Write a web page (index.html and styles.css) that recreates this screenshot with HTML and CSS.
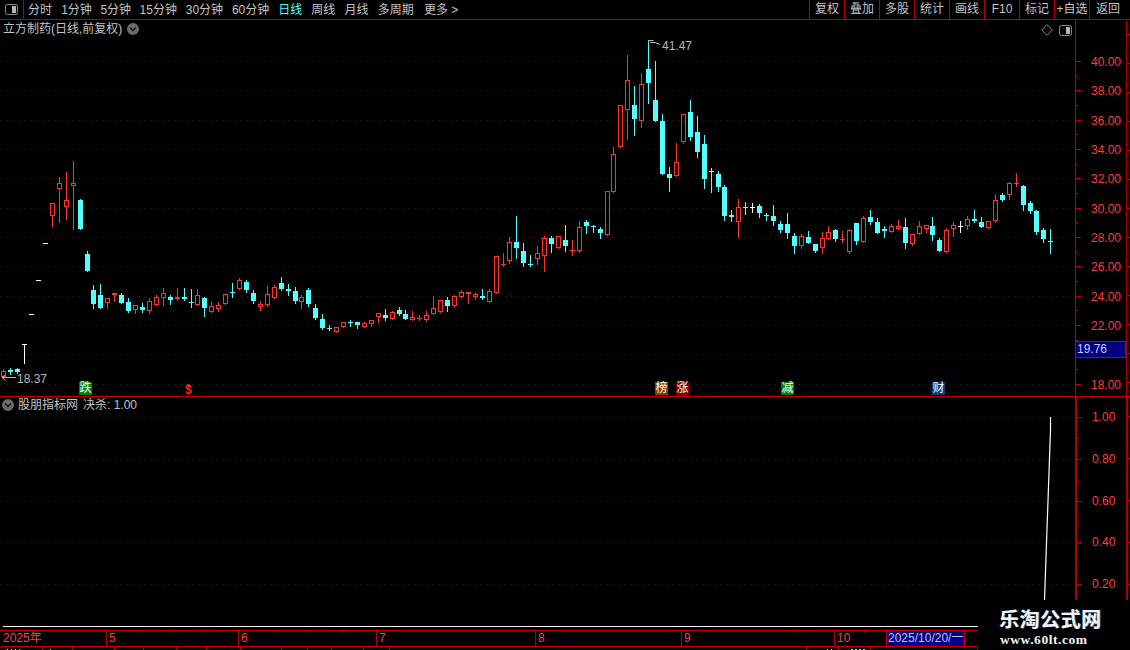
FILE: index.html
```html
<!DOCTYPE html>
<html lang="zh-CN">
<head>
<meta charset="utf-8">
<title>立方制药</title>
<link rel="stylesheet" href="styles.css">
</head>
<body>
<div class="app">
  <header class="toolbar">
    <div class="side-toggle">
      <svg class="icon-panel" viewBox="0 0 13 11"><rect x="0.5" y="0.5" width="12" height="10" rx="2" fill="none" stroke="#8a8a8a"/><rect x="7" y="2" width="4" height="7" fill="#b8b8b8"/></svg>
    </div>
    <nav class="periods">
      <span class="w24">分时</span><span class="w30">1分钟</span><span class="w30">5分钟</span><span class="w37">15分钟</span><span class="w37">30分钟</span><span class="w37">60分钟</span><span class="w24 active">日线</span><span class="w24">周线</span><span class="w24">月线</span><span class="w37">多周期</span><span>更多 &gt;</span>
    </nav>
    <nav class="actions">
      <span>复权</span><span>叠加</span><span>多股</span><span>统计</span><span>画线</span><span>F10</span><span>标记</span><span>+自选</span><span class="back">返回</span>
    </nav>
  </header>

  <section class="panel main-panel">
    <div class="plot">
      <svg id="price-chart" class="plot-svg" width="1075" height="376"></svg>
      <div class="panel-title">
        <span>立方制药(日线,前复权)</span>
        <svg class="chev" viewBox="0 0 12 12"><circle cx="6" cy="6" r="6" fill="#6a6a6a"/><path d="M3 4.5L6 7.5L9 4.5" fill="none" stroke="#111" stroke-width="1.3"/></svg>
      </div>
      <div class="plot-tools">
        <svg class="diamond" viewBox="0 0 12 12"><path d="M6 .7L11.3 6L6 11.3L.7 6Z" fill="none" stroke="#8a8a8a"/></svg>
        <svg class="icon-panel" viewBox="0 0 13 11"><rect x="0.5" y="0.5" width="12" height="10" rx="2" fill="none" stroke="#8a8a8a"/><rect x="7" y="2" width="4" height="7" fill="#b8b8b8"/></svg>
      </div>
      <div class="note high">41.47</div>
      <div class="note low">18.37</div>
      <span class="tag tag-green t-die">跌</span>
      <span class="dollar">$</span>
      <span class="tag tag-brown t-bang">榜</span>
      <span class="tag tag-red t-zhang">涨</span>
      <span class="tag tag-green t-jian">减</span>
      <span class="tag tag-blue t-cai">财</span>
    </div>
    <div class="axis">
      <svg id="price-axis" class="axis-svg" width="51" height="376"></svg>
      <div class="price-now">19.76</div>
    </div>
    <div class="edge"></div>
  </section>

  <section class="panel sub-panel">
    <div class="plot">
      <svg id="ind-chart" class="plot-svg" width="1075" height="203"></svg>
      <div class="panel-title sub-title">
        <svg class="chev" viewBox="0 0 12 12"><circle cx="6" cy="6" r="6" fill="#6a6a6a"/><path d="M3 4.500L6 7.500L9 4.500" fill="none" stroke="#111" stroke-width="1.3"/></svg>
        <span>股朋指标网</span><span class="value">决杀: 1.00</span>
      </div>
    </div>
    <div class="axis thick">
      <svg id="ind-axis" class="axis-svg" width="49" height="203"></svg>
    </div>
    <div class="edge thick"></div>
  </section>

  <footer class="footer">
    <div class="time-area">
      <div class="rule"></div>
      <div class="time-axis">
        <span class="m m-year">2025年</span><span class="m m-5">5</span><span class="m m-6">6</span><span class="m m-7">7</span><span class="m m-8">8</span><span class="m m-9">9</span><span class="m m-10">10</span>
        <span class="cursor-date">2025/10/20/一</span>
      </div>
      <div class="tabs">
        <span class="w43"><i class="bit bit-a"></i></span><span class="w30"><i class="bit bit-b"></i></span><span class="w42"></span><span class="w29"></span><span class="w33"></span><span class="w30"></span><span class="w34"></span><span class="w41"></span><span class="w26"></span><span class="w24"></span><span class="w32"></span><span class="w26"></span><span class="w417"></span><span class="w32"><i class="bit bit-c"></i></span><span class="w32"><i class="bit bit-d"></i></span><span class="w107"></span>
      </div>
    </div>
    <div class="watermark">
      <div class="wm-cn">乐淘公式网</div>
      <div class="wm-en">www.60lt.com</div>
    </div>
  </footer>
</div>
<script src="chart.js"></script>
</body>
</html>
```
FILE: styles.css
```css
* { box-sizing: border-box; }
html, body { margin: 0; padding: 0; background: #000; }
body {
  width: 1130px;
  height: 650px;
  overflow: hidden;
  font: 12px/14px "Liberation Sans", "Noto Sans CJK SC", sans-serif;
  color: #c4c4c4;
}
.app { display: flex; flex-direction: column; height: 650px; }

/* toolbar */
.toolbar {
  display: flex;
  height: 20px;
  flex: none;
  border-bottom: 1px solid #b00000;
}
.side-toggle {
  width: 24px;
  border-right: 1px solid #b00000;
  display: flex;
  align-items: center;
  padding-left: 5px;
}
.icon-panel { width: 13px; height: 11px; display: block; }
.periods { display: flex; gap: 9.2px; margin-left: 4px; align-items: center; white-space: nowrap; }
.periods span { display: block; }
.w24 { width: 24px; }
.w30 { width: 30px; }
.w37 { width: 37px; }
.active { color: #54ffff; }
.actions { display: flex; margin-left: auto; }
.actions span {
  width: 35px;
  border-left: 1px solid #b00000;
  text-align: center;
  line-height: 19px;
  white-space: nowrap;
}
.actions .back { width: 41px; padding-right: 4px; }

/* panels */
.panel { display: flex; flex: none; border-bottom: 1px solid #c00000; }
.main-panel { height: 377px; }
.sub-panel { height: 203px; border-bottom: 0; }
.plot { position: relative; width: 1075px; flex: none; }
.plot-svg { display: block; }
.axis { position: relative; width: 51px; flex: none; border-left: 1px solid #b00000; }
.axis.thick { border-left: 2px solid #b00000; }
.axis-svg { display: block; }
.edge {
  width: 4px;
  flex: none;
  border-left: 1px solid #b00000;
  background: repeating-linear-gradient(#b00000 0 1px, transparent 1px 29px) 0 14px;
}
.edge.thick { border-left-width: 2px; background: repeating-linear-gradient(#b00000 0 1px, transparent 1px 42px) 0 19px; }

.panel-title {
  position: absolute;
  left: 3px;
  top: 2px;
  display: flex;
  align-items: center;
  gap: 5px;
  white-space: nowrap;
}
.sub-title { left: 2px; top: 1px; gap: 4px; }
.sub-title .value { margin-left: 1px; }
.chev { width: 12px; height: 12px; display: block; }
.plot-tools {
  position: absolute;
  right: 3px;
  top: 4px;
  display: flex;
  gap: 6px;
  align-items: center;
}
.diamond { width: 12px; height: 12px; display: block; }

.note { position: absolute; color: #b8b8b8; }
.high { left: 662px; top: 19px; }
.low { left: 17px; top: 352px; }

.tag {
  position: absolute;
  top: 362px;
  width: 13px;
  height: 13px;
  color: #fff;
  font-size: 12px;
  line-height: 13px;
  text-align: center;
}
.tag-green { background: #008000; }
.tag-brown { background: #804000; }
.tag-red { background: #800000; }
.tag-blue { background: #004080; }
.t-die { left: 79px; }
.t-bang { left: 655px; }
.t-zhang { left: 676px; }
.t-jian { left: 781px; }
.t-cai { left: 932px; }
.dollar {
  position: absolute;
  left: 185px;
  top: 364px;
  width: 7px;
  color: #ff2020;
  font-weight: bold;
  font-size: 12px;
  line-height: 12px;
  text-align: center;
}

.price-now {
  position: absolute;
  left: 0;
  top: 321px;
  width: 50px;
  height: 17px;
  background: #000080;
  border: 1px solid #c00000;
  border-left: 0;
  color: #c8c8ff;
  line-height: 15px;
  padding-left: 1px;
}

/* footer */
.footer { display: flex; height: 50px; flex: none; }
.time-area { width: 978px; flex: none; display: flex; flex-direction: column; }
.rule { margin: 26px 0 0 3px; height: 1px; background: #f0f0f0; flex: none; }
.time-axis {
  position: relative;
  height: 17px;
  margin-top: 3px;
  flex: none;
  border-top: 1px solid #c00000;
  border-bottom: 1px solid #c00000;
  color: #ff3c3c;
  background:
    linear-gradient(#b00000, #b00000) 139px 0 / 1px 2px no-repeat,
    linear-gradient(#b00000, #b00000) 172px 0 / 1px 2px no-repeat,
    linear-gradient(#b00000, #b00000) 205px 0 / 1px 2px no-repeat,
    linear-gradient(#b00000, #b00000) 273px 0 / 1px 2px no-repeat,
    linear-gradient(#b00000, #b00000) 307px 0 / 1px 2px no-repeat,
    linear-gradient(#b00000, #b00000) 342px 0 / 1px 2px no-repeat,
    linear-gradient(#b00000, #b00000) 796px 0 / 1px 2px no-repeat,
    linear-gradient(#b00000, #b00000) 864px 0 / 1px 2px no-repeat;
}
.m {
  position: absolute;
  top: 0;
  padding-left: 2px;
  border-left: 1px solid #b00000;
  line-height: 14px;
  height: 15px;
}
.m-year { left: 1px; border-left: 0; }
.m-5 { left: 106px; }
.m-6 { left: 238px; }
.m-7 { left: 376px; }
.m-8 { left: 535px; }
.m-9 { left: 681px; }
.m-10 { left: 834px; }
.cursor-date {
  position: absolute;
  left: 886px;
  top: 0;
  width: 79px;
  height: 15px;
  background: #000080;
  border-left: 1px solid #c00000;
  border-right: 1px solid #c00000;
  color: #c0c0ff;
  line-height: 14px;
  padding-left: 1px;
  white-space: nowrap;
}
.tabs { display: flex; height: 4px; overflow: hidden; flex: none; }
.tabs span { position: relative; border-right: 1px solid #b00000; flex: none; height: 4px; }
.w43 { width: 43px; }
.w42 { width: 42px; }
.w29 { width: 29px; }
.w33 { width: 33px; }
.w34 { width: 34px; }
.w41 { width: 41px; }
.w26 { width: 26px; }
.w32 { width: 32px; }
.w417 { width: 417px; }
.w107 { width: 107px; }
.bit {
  position: absolute;
  bottom: 0;
  height: 2px;
  background: repeating-linear-gradient(90deg, #d8d8d8 0 1px, transparent 1px 4px);
}
.bit-a { left: 7px; width: 15px; }
.bit-b { left: 7px; width: 3px; }
.bit-c { left: 20px; width: 6px; }
.bit-d { left: 12px; width: 14px; background: repeating-linear-gradient(90deg, #7fe8ff 0 2px, transparent 2px 4px); }

.watermark { flex: 1; padding: 9px 0 0 21px; background: #000; }
.wm-cn {
  font: bold 20px/23px "Liberation Serif", "Noto Sans CJK SC", sans-serif;
  color: #f4f4f4;
  letter-spacing: .5px;
  text-shadow: 1px 0 #4a6a9a;
  white-space: nowrap;
}
.wm-en {
  font: bold 13.5px/15px "Liberation Serif", serif;
  color: #f4f4f4;
  letter-spacing: .55px;
  white-space: nowrap;
  margin-left: 1px;
}
```
FILE: chart.js
```js
var NS = 'http://www.w3.org/2000/svg';
var RED = '#ff3232', CYAN = '#54ffff', WHITE = '#ffffff';
var TOP = 20;

function el(parent, name, attrs, text) {
  var n = document.createElementNS(NS, name);
  for (var k in attrs) n.setAttribute(k, attrs[k]);
  if (text) n.textContent = text;
  parent.appendChild(n);
  return n;
}

/* [colour, high, bodyTop, bodyBottom, low] in page pixels; r hollow red, R flat red, c cyan, w white */
var data = [
['r',369,371,377,378],['c',368,370,372,374],['c',368,369,372,373],['w',344,344,344,363],['w',314,314,314,314],
['w',280,280,280,280],['w',243,243,243,243],['r',203,203,216,226],['r',177,183,189,222],['r',172,200,207,219],
['r',161,183,186,229],['c',199,200,229,229],['c',251,254,271,271],['c',285,290,304,308],['c',284,295,308,308],
['r',298,298,303,308],['R',293,293,295,301],['c',293,295,303,303],['c',298,302,311,312],['r',305,305,310,313],
['c',303,307,310,312],['r',298,301,311,313],['r',295,297,305,305],['r',288,293,298,305],['c',295,297,300,304],
['R',288,297,299,300],['c',288,297,299,300],['c',289,302,303,307],['r',289,295,305,305],['c',297,298,308,316],
['r',302,306,312,312],['r',302,305,309,311],['r',294,294,304,304],['c',283,292,293,297],['r',278,280,289,289],
['c',280,282,290,292],['c',290,293,301,303],['r',301,304,307,310],['r',286,294,305,306],['r',285,287,298,298],
['c',277,283,289,290],['c',284,289,291,295],['c',287,291,301,303],['r',295,297,302,308],['c',288,290,304,306],
['c',304,308,318,319],['c',314,319,328,329],['c',325,328,329,330],['r',327,327,332,332],['r',322,322,327,327],
['c',320,322,323,326],['c',322,322,325,328],['r',322,323,327,327],['r',320,320,324,326],['r',313,313,317,322],
['c',309,315,318,320],['r',311,312,319,319],['c',307,310,314,315],['c',310,314,319,319],['r',311,317,320,320],
['R',315,318,319,320],['r',311,315,320,321],['r',296,308,314,314],['r',300,300,312,312],['c',297,300,306,311],
['r',295,296,306,307],['r',290,292,297,298],['R',292,292,294,303],['r',293,294,297,299],['c',289,296,298,299],
['r',289,291,302,302],['r',256,256,293,293],['R',253,264,265,266],['r',237,242,261,263],['c',216,242,248,258],
['c',243,251,263,266],['c',255,264,265,266],['r',246,253,259,264],['r',236,238,256,271],['c',236,238,244,252],
['r',236,236,248,248],['c',225,240,246,251],['R',240,250,251,255],['r',221,227,251,252],['c',220,222,226,233],
['c',225,226,227,232],['c',227,229,233,238],['r',191,191,235,235],['r',147,154,192,192],['r',105,105,147,147],
['r',55,80,110,139],['c',86,105,119,135],['r',73,84,121,127],['c',40,69,83,103],['c',61,100,121,121],
['c',114,121,174,174],['c',167,174,178,191],['r',143,162,176,176],['r',114,114,142,143],['c',100,112,137,140],
['c',116,132,152,157],['c',135,144,179,188],['c',168,171,172,192],['c',171,174,187,191],['c',185,187,216,220],
['c',210,215,217,221],['r',199,207,222,237],['c',202,207,208,214],['w',203,207,208,212],['c',204,206,213,217],
['c',213,215,216,220],['c',205,216,221,225],['c',221,224,230,232],['c',213,224,233,238],['c',233,236,246,253],
['r',234,236,246,248],['c',231,237,243,243],['c',244,244,251,252],['r',232,238,248,253],['r',226,232,239,239],
['c',229,230,239,241],['R',231,239,240,242],['r',229,230,252,253],['c',223,223,241,244],['r',216,218,242,242],
['c',210,217,222,224],['c',218,222,233,233],['c',226,229,231,237],['r',224,226,232,232],['r',220,226,229,229],
['c',218,227,243,248],['r',234,234,244,245],['r',221,226,234,234],['r',225,225,229,232],['c',217,226,235,240],
['c',238,240,251,251],['r',228,230,252,252],['r',222,225,229,236],['w',221,226,227,232],['r',216,219,226,229],
['c',210,219,221,222],['c',217,222,227,227],['r',221,221,228,228],['r',194,200,221,222],['c',193,195,200,201],
['r',182,183,195,199],['R',173,183,184,186],['c',185,186,205,210],['c',201,203,211,213],['c',210,211,232,234],
['c',228,230,239,242],['c',229,241,242,253]
];

function drawPrice() {
  var svg = document.getElementById('price-chart');
  for (var v = 40; v >= 18; v -= 2) {
    var gy = Math.round(61 + (40 - v) * 14.66) - TOP + 0.5;
    el(svg, 'line', {x1: 1, x2: 1075, y1: gy, y2: gy, stroke: '#8a0000', 'stroke-dasharray': '1 5'});
  }
  data.forEach(function (d, i) {
    var x = Math.round(3.3 + 6.934 * i);
    var col = d[0] === 'c' ? CYAN : d[0] === 'w' ? WHITE : RED;
    var hi = d[1] - TOP, top = d[2] - TOP, bot = d[3] - TOP, lo = d[4] - TOP;
    if (lo > hi) {
      el(svg, 'rect', {x: x, y: hi, width: 1, height: lo - hi + 1, fill: col});
    }
    if (d[0] === 'r') {
      /* hollow body: 5px wide outline, crisp 1px stroke */
      el(svg, 'rect', {x: x - 1.5, y: top + 0.5, width: 4, height: Math.max(bot - top - 1, 1),
        fill: '#000', stroke: col, 'stroke-width': 1});
    } else {
      el(svg, 'rect', {x: x - 2, y: top, width: 5, height: Math.max(bot - top, 1), fill: col});
    }
  });
  /* extreme markers */
  var mark = {stroke: '#b8b8b8', fill: 'none'};
  el(svg, 'path', Object.assign({d: 'M648.5 20.5h5M648.5 20.5v3M650 22.5h5l5 2'}, mark));
  el(svg, 'path', Object.assign({d: 'M2 357.5h14M2 357.5l3.5-3M2 357.5l3.5 3'}, mark));
  /* arrow over the S marker */
  el(svg, 'path', {d: 'M188.5 363.500l3 3h-6z', fill: RED});
}

function drawAxis(id, labels, startY, step, textShift) {
  var svg = document.getElementById(id);
  labels.forEach(function (t, i) {
    var y = Math.round(startY + i * step) + 0.5;
    el(svg, 'line', {x1: 0, x2: 5, y1: y, y2: y, stroke: '#c00000'});
    el(svg, 'text', {x: 15, y: y + 4.5 + textShift, fill: '#ff3c3c', 'font-size': 12,
      'font-family': 'Liberation Sans, sans-serif'}, t);
    var my = Math.round(startY + (i + 0.5) * step) + 0.5;
    el(svg, 'line', {x1: 0, x2: 2, y1: my, y2: my, stroke: '#c00000'});
  });
}

function drawIndicator() {
  var svg = document.getElementById('ind-chart');
  for (var i = 0; i < 5; i++) {
    var y = Math.round(20 + i * 41.8) + 0.5;
    el(svg, 'line', {x1: 1, x2: 1075, y1: y, y2: y, stroke: '#8a0000', 'stroke-dasharray': '1 5'});
  }
  el(svg, 'polyline', {points: '1050.5,20 1050.5,33 1044.5,203', fill: 'none', stroke: WHITE, 'stroke-width': 1.2});
}

drawPrice();
drawAxis('price-axis', ['40.00','38.00','36.00','34.00','32.00','30.00','28.00','26.00','24.00','22.00','','18.00'], 41, 29.32, 0);
drawAxis('ind-axis', ['1.00','0.80','0.60','0.40','0.20'], 20, 41.8, -1);
drawIndicator();
```
